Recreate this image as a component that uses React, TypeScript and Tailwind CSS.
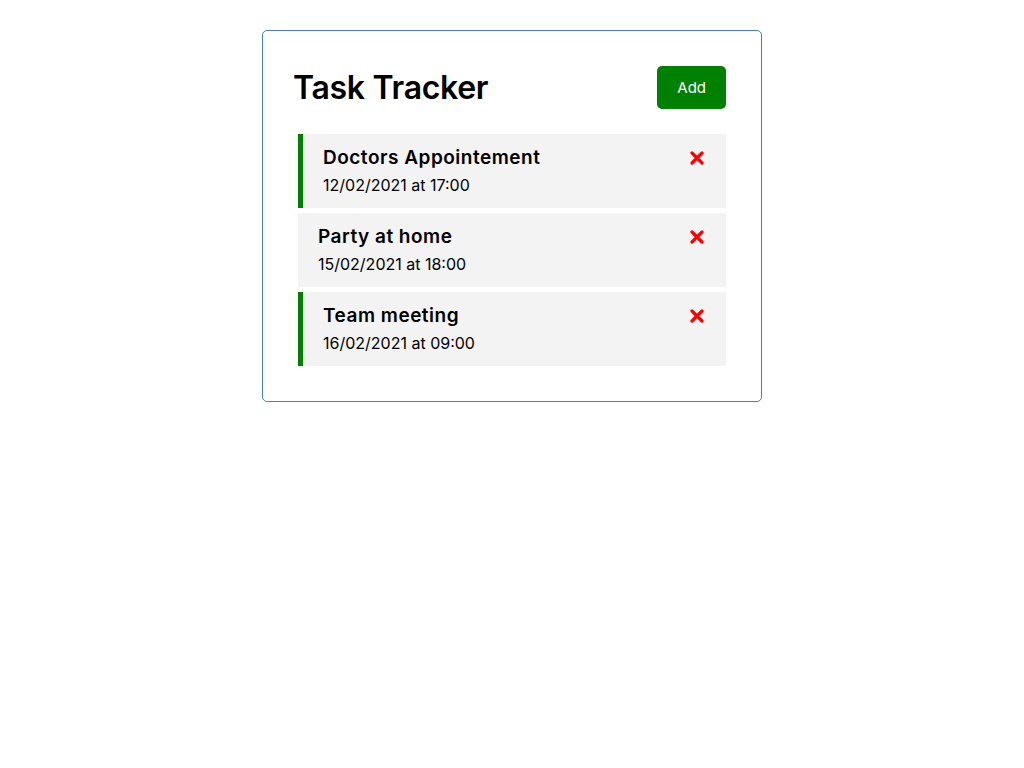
import React from "react";

const tasks = [
  { id: 1, text: "Doctors Appointement", day: "12/02/2021 at 17:00", reminder: true },
  { id: 2, text: "Party at home", day: "15/02/2021 at 18:00", reminder: false },
  { id: 3, text: "Team meeting", day: "16/02/2021 at 09:00", reminder: true },
];

function XIcon() {
  return (
    <svg width="14" height="14" viewBox="0 0 14 14" className="shrink-0 mr-[2px]">
      <path d="M2 2 L12 12 M12 2 L2 12" stroke="#ff0000" strokeWidth="3.2" strokeLinecap="round" />
    </svg>
  );
}

export default function App() {
  return (
    <div className="min-h-[768px] bg-white text-black" style={{ fontFamily: "Inter, 'Open Sans', sans-serif" }}>
      <div className="mx-auto mt-[30px] w-[500px] min-h-[300px] rounded-[5px] border border-[#4682b4] p-[30px]">
        <header className="mb-[20px] flex items-center justify-between">
          <h1 className="text-[32px] font-semibold leading-[48px] tracking-[-0.3px]">Task Tracker</h1>
          <button className="m-[5px] rounded-[5px] bg-[#008000] px-[20px] py-[10px] text-[15px] leading-[23px] text-white">
            Add
          </button>
        </header>
        <div className="flex flex-col gap-[5px] px-[5px] pb-[5px]">
          {tasks.map((t) => (
            <div
              key={t.id}
              className={`bg-[#f3f3f3] py-[10px] pl-[20px] pr-[20px] ${t.reminder ? "border-l-[5px] border-[#008000]" : ""}`}
            >
              <h3 className="flex items-center justify-between text-[19px] font-semibold leading-[28px] tracking-[0.5px]">
                {t.text}
                <XIcon />
              </h3>
              <p className="text-[16px] leading-[26px]">{t.day}</p>
            </div>
          ))}
        </div>
      </div>
    </div>
  );
}
